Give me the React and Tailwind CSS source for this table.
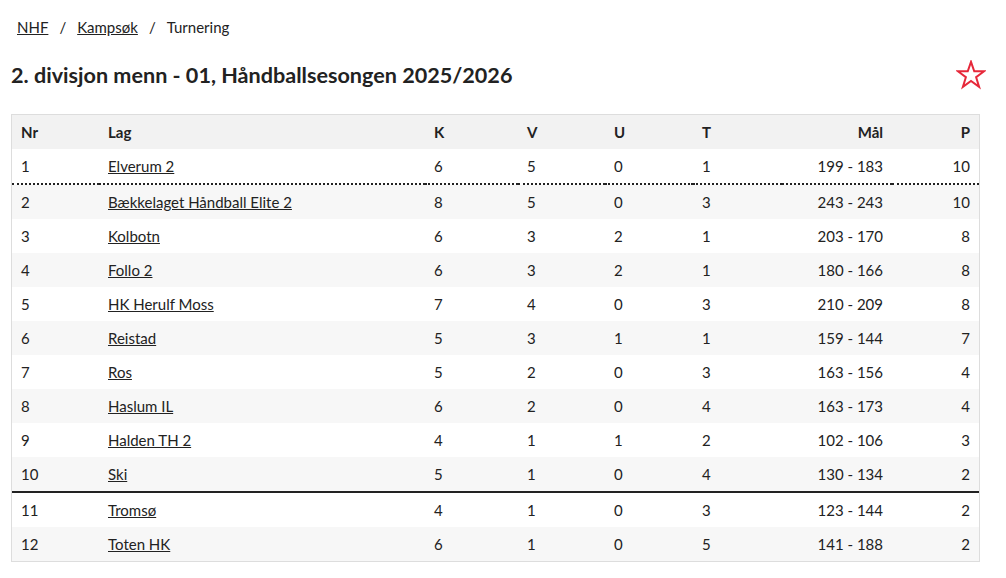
import React from 'react';

const rows = [
  [1, 'Elverum 2', 6, 5, 0, 1, '199 - 183', 10],
  [2, 'Bækkelaget Håndball Elite 2', 8, 5, 0, 3, '243 - 243', 10],
  [3, 'Kolbotn', 6, 3, 2, 1, '203 - 170', 8],
  [4, 'Follo 2', 6, 3, 2, 1, '180 - 166', 8],
  [5, 'HK Herulf Moss', 7, 4, 0, 3, '210 - 209', 8],
  [6, 'Reistad', 5, 3, 1, 1, '159 - 144', 7],
  [7, 'Ros', 5, 2, 0, 3, '163 - 156', 4],
  [8, 'Haslum IL', 6, 2, 0, 4, '163 - 173', 4],
  [9, 'Halden TH 2', 4, 1, 1, 2, '102 - 106', 3],
  [10, 'Ski', 5, 1, 0, 4, '130 - 134', 2],
  [11, 'Tromsø', 4, 1, 0, 3, '123 - 144', 2],
  [12, 'Toten HK', 6, 1, 0, 5, '141 - 188', 2],
];

function Star() {
  return (
    <svg width="30" height="30" viewBox="0 0 24 24" fill="none" stroke="#e6283a" strokeWidth="1.6" strokeLinejoin="miter">
      <polygon points="12,1.5 14.6,9 22.5,9 16.1,13.8 18.5,21.5 12,16.8 5.5,21.5 7.9,13.8 1.5,9 9.4,9" />
    </svg>
  );
}

export default function App() {
  return (
    <div className="min-h-screen bg-white text-[#222] text-[15px] font-['Lato','Liberation_Sans',sans-serif]">
      <nav className="flex items-center pt-[17px] pl-[17px] h-[38px] text-[15px]">
        <a className="underline">NHF</a>
        <span className="mx-[11px]">/</span>
        <a className="underline">Kampsøk</a>
        <span className="mx-[11px]">/</span>
        <span>Turnering</span>
      </nav>
      <div className="flex items-center justify-between pl-[11px] pr-[20px] mt-[19px] h-[36px]">
        <h1 className="text-[21.6px] font-bold">2. divisjon menn - 01, Håndballsesongen 2025/2026</h1>
        <Star />
      </div>
      <div className="px-[11px] mt-[21px]">
        <table className="w-[969px] table-fixed border border-[#ddd] border-separate border-spacing-0">
          <colgroup>
            <col className="w-[87px]" />
            <col className="w-[326px]" />
            <col className="w-[93px]" />
            <col className="w-[87px]" />
            <col className="w-[88px]" />
            <col className="w-[89px]" />
            <col className="w-[110px]" />
            <col className="w-[87px]" />
          </colgroup>
          <thead>
            <tr className="bg-[#f2f2f2] h-[34px] font-bold text-left">
              <th className="px-[9px]">Nr</th>
              <th className="px-[9px]">Lag</th>
              <th className="px-[9px]">K</th>
              <th className="px-[9px]">V</th>
              <th className="px-[9px]">U</th>
              <th className="px-[9px]">T</th>
              <th className="px-[9px] text-right">Mål</th>
              <th className="px-[9px] text-right">P</th>
            </tr>
          </thead>
          <tbody>
            {rows.map((r, i) => {
              const line =
                i === 0
                  ? ' h-[36px] border-b-2 border-dotted border-[#222]'
                  : i === 9
                  ? ' h-[36px] border-b-2 border-solid border-[#222]'
                  : ' h-[34px]';
              const td = 'px-[9px]' + line;
              return (
                <tr key={r[0]} className={i % 2 === 1 ? 'bg-[#f7f7f7]' : 'bg-white'}>
                  <td className={td}>{r[0]}</td>
                  <td className={td}><a className="underline">{r[1]}</a></td>
                  <td className={td}>{r[2]}</td>
                  <td className={td}>{r[3]}</td>
                  <td className={td}>{r[4]}</td>
                  <td className={td}>{r[5]}</td>
                  <td className={td + ' text-right'}>{r[6]}</td>
                  <td className={td + ' text-right'}>{r[7]}</td>
                </tr>
              );
            })}
          </tbody>
        </table>
      </div>
    </div>
  );
}
